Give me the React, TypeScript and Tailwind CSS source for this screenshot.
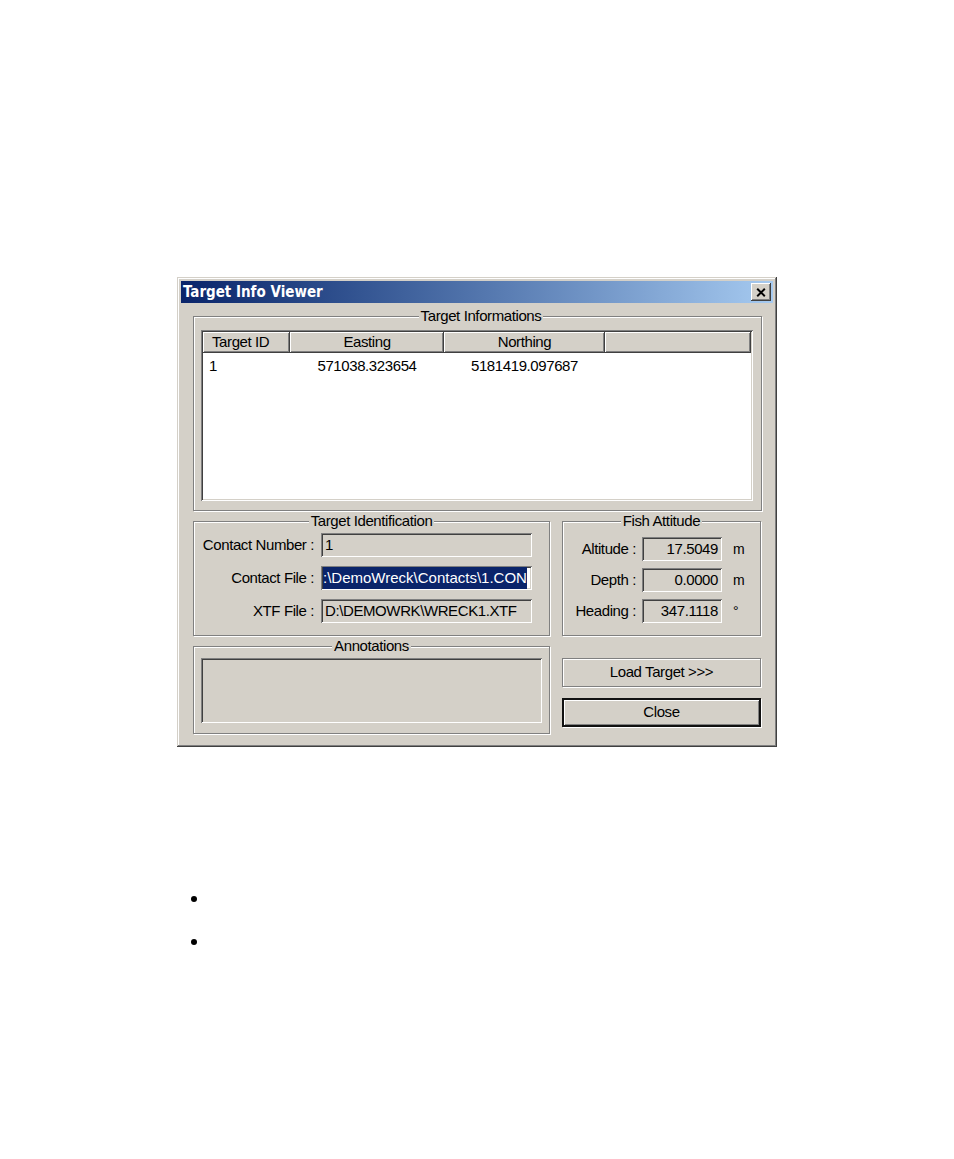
import type { ReactNode } from "react";

const raised =
  "shadow-[inset_-1px_-1px_#404040,inset_1px_1px_#ffffff,inset_-2px_-2px_#808080,inset_2px_2px_#d4d0c8]";
const sunken =
  "shadow-[inset_1px_1px_#808080,inset_-1px_-1px_#ffffff,inset_2px_2px_#404040,inset_-2px_-2px_#d4d0c8]";

function Group({ title, className = "", children }: { title: string; className?: string; children?: ReactNode }) {
  return (
    <div className={`border border-[#808080] shadow-[inset_1px_1px_#ffffff,1px_1px_#ffffff] ${className}`}>
      <div className="mx-auto -mt-[9px] w-fit bg-[#d4d0c8] px-[2px] leading-[16px]">{title}</div>
      {children}
    </div>
  );
}

function Field({ children, className = "" }: { children?: ReactNode; className?: string }) {
  return (
    <div className={`flex h-[24px] items-center overflow-hidden whitespace-nowrap px-[4px] ${sunken} ${className}`}>
      {children}
    </div>
  );
}

const columns = [
  { label: "Target ID", width: "w-[87px]", align: "justify-start pl-[9px]" },
  { label: "Easting", width: "w-[154px]", align: "justify-center" },
  { label: "Northing", width: "w-[161px]", align: "justify-center" },
];

// the contact file box is scrolled to its end, so the drive letter is out of view
const idRows = [
  { label: "Contact Number :", value: "1" },
  { label: "Contact File :", value: ":\\DemoWreck\\Contacts\\1.CON", selected: true },
  { label: "XTF File :", value: "D:\\DEMOWRK\\WRECK1.XTF" },
];

const attitude = [
  { label: "Altitude :", value: "17.5049", unit: "m" },
  { label: "Depth :", value: "0.0000", unit: "m" },
  { label: "Heading :", value: "347.1118", unit: "°" },
];

export default function App() {
  return (
    <div className="min-h-[1159px] bg-white pl-[177px] pt-[277px] font-['Liberation_Sans',Arial,sans-serif] text-[15px] tracking-[-0.4px] text-black">
      <div className="w-[600px] bg-[#d4d0c8] p-[4px] shadow-[inset_-1px_-1px_#404040,inset_1px_1px_#d4d0c8,inset_-2px_-2px_#808080,inset_2px_2px_#ffffff]">
        {/* title bar */}
        <div className="flex h-[22px] items-center justify-between bg-linear-to-r from-[#0a246a] to-[#a6caf0] pl-[2px]">
          <span className="font-['DejaVu_Sans_Condensed','DejaVu_Sans',sans-serif] text-[15px] font-bold tracking-normal text-white font-stretch-condensed">
            Target Info Viewer
          </span>
          <button type="button" className={`mr-[2px] flex h-[18px] w-[20px] items-center justify-center bg-[#d4d0c8] ${raised}`}>
            <svg width="10" height="9" viewBox="0 0 10 9">
              <path d="M1.2 0.8L8.8 8.2M8.8 0.8L1.2 8.2" stroke="#000" strokeWidth="2" />
            </svg>
          </button>
        </div>

        <div className="pb-[9px] pl-[12px] pr-[11px]">
          <Group title="Target Informations" className="mt-[13px] h-[195px] w-[569px] pl-[7px]">
            <div className={`mt-[6px] h-[171px] w-[552px] bg-white p-[2px] ${sunken}`}>
              <div className="flex h-[21px]">
                {columns.map((c) => (
                  <div key={c.label} className={`flex items-center bg-[#d4d0c8] ${c.width} ${c.align} ${raised}`}>
                    {c.label}
                  </div>
                ))}
                <div className={`flex-1 bg-[#d4d0c8] ${raised}`} />
              </div>
              <div className="flex pt-[4px] leading-[18px]">
                <div className="w-[87px] pl-[6px]">1</div>
                <div className="w-[154px] text-center">571038.323654</div>
                <div className="w-[161px] text-center">5181419.097687</div>
              </div>
            </div>
          </Group>

          <div className="mt-[10px] grid grid-cols-[357px_199px] gap-x-[12px]">
            <Group title="Target Identification" className="h-[115px]">
              <div className="mt-[4px] flex flex-col gap-[9px]">
                {idRows.map((r) => (
                  <div key={r.label} className="flex items-center">
                    <div className="w-[120px] text-right">{r.label}</div>
                    {r.selected ? (
                      <Field className="ml-[7px] w-[211px] bg-white pl-[2px] pr-[2px] tracking-normal">
                        <span className="bg-[#0a246a] text-white">{r.value}</span>
                      </Field>
                    ) : (
                      <Field className="ml-[7px] w-[211px] bg-[#d4d0c8]">{r.value}</Field>
                    )}
                  </div>
                ))}
              </div>
            </Group>

            <Group title="Fish Attitude" className="h-[115px]">
              <div className="mt-[8px] flex flex-col gap-[7px]">
                {attitude.map((r) => (
                  <div key={r.label} className="flex items-center">
                    <div className="w-[73px] text-right">{r.label}</div>
                    <Field className="ml-[6px] w-[80px] justify-end bg-[#d4d0c8] pr-[4px]">{r.value}</Field>
                    <span className="ml-[11px] text-[14px]">{r.unit}</span>
                  </div>
                ))}
              </div>
            </Group>
          </div>

          <div className="mt-[10px] grid grid-cols-[357px_199px] gap-x-[12px]">
            <Group title="Annotations" className="h-[88px]">
              <div className={`ml-[7px] mt-[4px] h-[65px] w-[341px] bg-[#d4d0c8] ${sunken}`} />
            </Group>
            <div className="flex flex-col">
              <button
                type="button"
                className="mt-[12px] h-[29px] w-[199px] border border-[#808080] bg-[#d4d0c8] shadow-[inset_1px_1px_#ffffff,1px_1px_#ffffff]"
              >
                Load Target &gt;&gt;&gt;
              </button>
              <button
                type="button"
                className="mt-[11px] h-[29px] w-[199px] border-2 border-[#111111] bg-[#d4d0c8] shadow-[inset_1px_1px_#ffffff,inset_-1px_-1px_#808080,1px_1px_#ffffff]"
              >
                Close
              </button>
            </div>
          </div>
        </div>
      </div>

      <ul className="ml-[14px] mt-[149px] flex flex-col gap-[37px]">
        <li className="h-[6px] w-[6px] rounded-full bg-black" />
        <li className="h-[6px] w-[6px] rounded-full bg-black" />
      </ul>
    </div>
  );
}
